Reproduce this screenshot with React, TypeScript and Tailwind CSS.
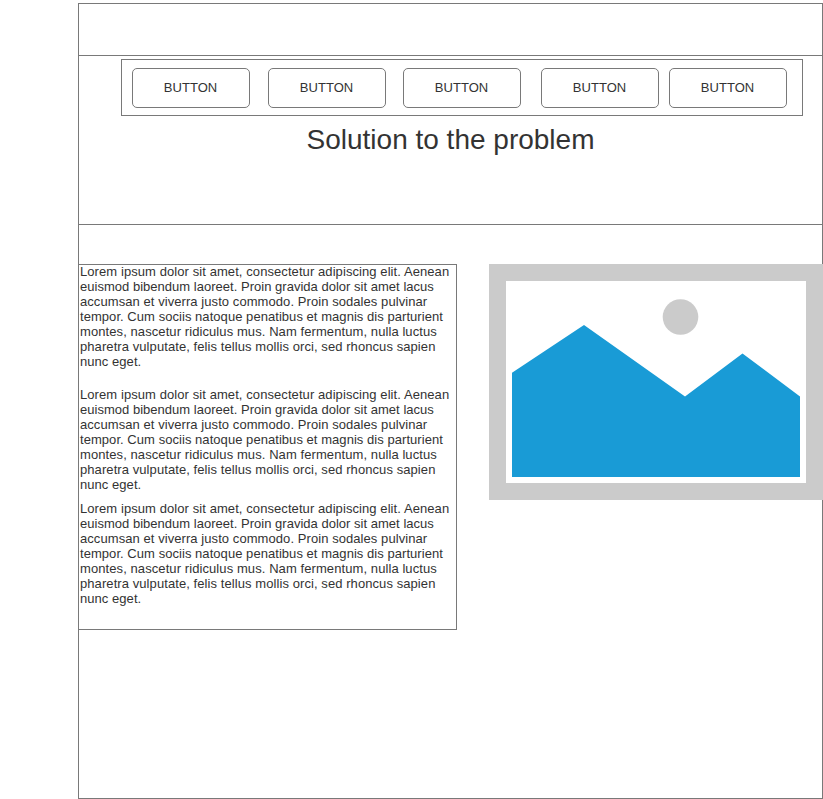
const LINES = [
  { text: "Lorem ipsum dolor sit amet, consectetur adipiscing elit. Aenean", tracking: "tracking-[0.08px]" },
  { text: "euismod bibendum laoreet. Proin gravida dolor sit amet lacus", tracking: "tracking-[0.02px]" },
  { text: "accumsan et viverra justo commodo. Proin sodales pulvinar", tracking: "tracking-[0.07px]" },
  { text: "tempor. Cum sociis natoque penatibus et magnis dis parturient", tracking: "tracking-[0.05px]" },
  { text: "montes, nascetur ridiculus mus. Nam fermentum, nulla luctus", tracking: "tracking-[0.085px]" },
  { text: "pharetra vulputate, felis tellus mollis orci, sed rhoncus sapien", tracking: "tracking-[0.078px]" },
  { text: "nunc eget.", tracking: "tracking-[0.05px]" },
];

function NavButton({ className = "" }: { className?: string }) {
  return (
    <button
      className={`h-10 w-[118px] shrink-0 rounded-[5px] border border-[#797979] bg-white pb-0.5 pr-px text-center text-[13px] leading-[15px] tracking-[0.05px] ${className}`}
    >
      BUTTON
    </button>
  );
}

function Paragraph({ className = "" }: { className?: string }) {
  return (
    <p className={`whitespace-nowrap text-[13px] leading-[15px] ${className}`}>
      {LINES.map((line) => (
        <span key={line.text} className={`block ${line.tracking}`}>
          {line.text}
        </span>
      ))}
    </p>
  );
}

function PictureCard() {
  return (
    <figure className="-mr-px h-[236px] w-[334px] shrink-0 bg-[#cbcbcb] p-[17px]">
      <svg viewBox="0 0 300 202" className="block h-[202px] w-[300px] bg-white">
        <circle cx="174.5" cy="36" r="17.8" fill="#cbcbcb" />
        <path d="M6 91.7 78 44l101 71.5L236.5 72.5 294 115.5V196H6Z" fill="#199bd6" />
      </svg>
    </figure>
  );
}

export default function App() {
  return (
    <div className="h-[799px] w-[823px] overflow-hidden bg-white pl-[78px] pt-[3px] font-['Liberation_Sans',Arial,sans-serif] text-[#333333]">
      <div className="flex h-[796px] w-[745px] flex-col border border-[#797979]">
        <div className="h-[52px] shrink-0 border-b border-[#797979]" />
        <header className="h-[169px] shrink-0 border-b border-[#797979] pt-[3px]">
          <nav className="ml-[42px] flex h-[57px] w-[682px] border border-[#797979] pl-[10px] pt-2">
            <NavButton />
            <NavButton className="ml-[18px]" />
            <NavButton className="ml-[17px]" />
            <NavButton className="ml-5" />
            <NavButton className="ml-[10px]" />
          </nav>
          <h1 className="pt-2 text-center text-[28px] leading-8">Solution to the problem</h1>
        </header>
        <main className="flex items-start justify-between pt-[39px]">
          <section className="-ml-px h-[366px] w-[379px] shrink-0 border border-[#797979] pl-px">
            <Paragraph className="-mt-px" />
            <Paragraph className="mt-[18px]" />
            <Paragraph className="mt-[9px]" />
          </section>
          <PictureCard />
        </main>
      </div>
    </div>
  );
}
